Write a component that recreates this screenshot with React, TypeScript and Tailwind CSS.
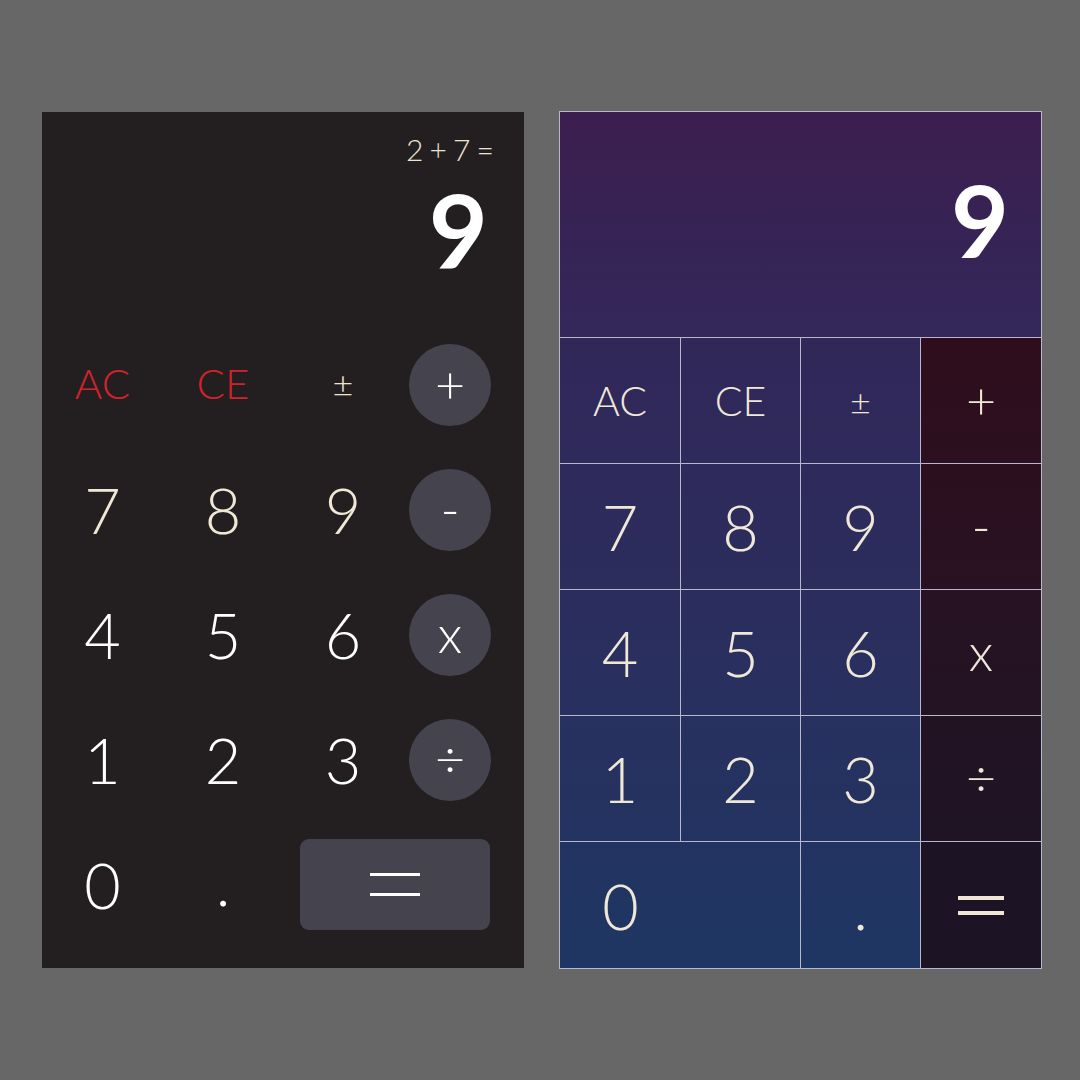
import React from 'react';

// 左側：深色圓形按鍵計算機
const darkRows = [
  ['AC', 'CE', '±', '+'],
  ['7', '8', '9', '-'],
  ['4', '5', '6', 'x'],
  ['1', '2', '3', '÷'],
];

function DarkCalc() {
  return (
    <div className="w-[482px] h-[856px] bg-[#231f20] flex flex-col">
      <div className="h-[210px] flex flex-col items-end pr-[31px] pt-[22px]">
        <div className="text-[30px] leading-[30px] font-light text-[#ece4d2] tracking-[-1px]">2 + 7 =</div>
        <div className="mt-[14px] mr-[5px] text-[102px] leading-[102px] font-bold text-white">9</div>
      </div>
      <div className="grid grid-cols-[121px_120px_120px_94px] auto-rows-[125px]">
        {darkRows.map((row, r) =>
          row.map((k, c) => {
            if (c === 3) {
              return (
                <div key={k} className="flex items-center justify-center">
                  <div className="w-[82px] h-[82px] rounded-full bg-[#45444e] flex items-center justify-center text-white text-[52px] font-light leading-none pb-[4px]">
                    {k}
                  </div>
                </div>
              );
            }
            const red = r === 0 && c < 2;
            const small = r === 0;
            return (
              <div
                key={k}
                className={`flex items-center justify-center font-light leading-none ${
                  red ? 'text-[#d2232a] text-[42px] pb-[4px]' : small ? 'text-[#ece4d2] text-[36px] pb-[4px]' : r === 1 ? 'text-[#efe8d5] text-[63px]' : 'text-white text-[63px]'
                }`}
              >
                {k}
              </div>
            );
          })
        )}
        <div className="flex items-center justify-center text-white text-[63px] font-light leading-none">0</div>
        <div className="flex items-center justify-center text-white text-[63px] font-light leading-none pb-[6px]">.</div>
        <div className="col-span-2 flex items-center pl-[17px] pr-[7px]">
          <div className="w-full h-[91px] rounded-[9px] bg-[#45444e] flex flex-col items-center justify-center gap-[17px]">
            <div className="w-[50px] h-[3px] bg-white" />
            <div className="w-[50px] h-[3px] bg-white" />
          </div>
        </div>
      </div>
    </div>
  );
}

// 右側：漸層格線計算機
const numRows = [
  { keys: ['AC', 'CE', '±'], op: '+', opBg: 'bg-gradient-to-b from-[#2f0d1c] to-[#2c1020]', size: ['text-[41px]', 'text-[41px]', 'text-[36px]'] },
  { keys: ['7', '8', '9'], op: '-', opBg: 'bg-gradient-to-b from-[#2c0f1f] to-[#281221]', size: ['text-[63px]', 'text-[63px]', 'text-[63px]'] },
  { keys: ['4', '5', '6'], op: 'x', opBg: 'bg-gradient-to-b from-[#271222] to-[#231323]', size: ['text-[63px]', 'text-[63px]', 'text-[63px]'] },
  { keys: ['1', '2', '3'], op: '÷', opBg: 'bg-gradient-to-b from-[#221323] to-[#1f1424]', size: ['text-[63px]', 'text-[63px]', 'text-[63px]'] },
];

function GridCalc() {
  return (
    <div className="w-[483px] h-[858px] border border-[#b9b7cb] flex flex-col">
      <div className="h-[226px] shrink-0 bg-gradient-to-b from-[#3b1e4f] to-[#33275a] border-b border-[#b9b7cb] flex items-center justify-end pr-[32px] pb-[12px]">
        <div className="text-[100px] leading-[100px] font-bold text-white">9</div>
      </div>
      <div className="flex-1 bg-gradient-to-b from-[#312759] to-[#1e3663] grid grid-cols-[121px_120px_120px_120px] grid-rows-5 text-[#efe8d6] font-light leading-none">
        {numRows.map((row) => (
          <React.Fragment key={row.op}>
            {row.keys.map((k, i) => (
              <div key={k} className={`flex items-center justify-center border-r border-b border-[#b9b7cb] ${row.size[i]}`}>
                {k}
              </div>
            ))}
            <div className={`flex items-center justify-center border-b border-[#b9b7cb] text-[52px] pb-[4px] ${row.opBg}`}>{row.op}</div>
          </React.Fragment>
        ))}
        <div className="col-span-2 flex items-center border-r border-[#b9b7cb] text-[63px]">
          <div className="w-[121px] text-center">0</div>
        </div>
        <div className="flex items-center justify-center border-r border-[#b9b7cb] text-[63px]">.</div>
        <div className="flex flex-col items-center justify-center gap-[11px] bg-[#1c1424]">
          <div className="w-[46px] h-[4px] bg-[#efe6d5]" />
          <div className="w-[46px] h-[4px] bg-[#efe6d5]" />
        </div>
      </div>
    </div>
  );
}

export default function App() {
  return (
    <div className="w-[1080px] h-[1080px] bg-[#676767] flex items-start pt-[112px] pl-[42px] gap-[35px]" style={{ fontFamily: 'Lato, "Open Sans", sans-serif' }}>
      <DarkCalc />
      <div className="-mt-px">
        <GridCalc />
      </div>
    </div>
  );
}
